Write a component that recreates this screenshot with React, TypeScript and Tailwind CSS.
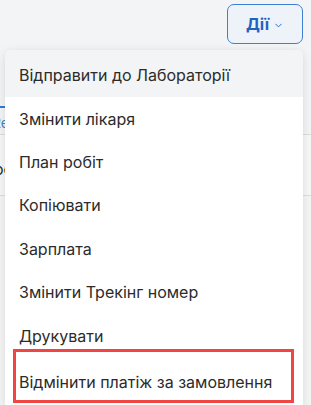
import { ChevronDown } from "lucide-react";

const items = [
  "Змінити лікаря",
  "План робіт",
  "Копіювати",
  "Зарплата",
  "Змінити Трекінг номер",
  "Друкувати",
];

export default function App() {
  return (
    <div
      className="relative h-[405px] w-[311px] overflow-hidden bg-[#f3f4f6] text-[#2b2b2b]"
      style={{ fontFamily: "Inter, 'Noto Sans', sans-serif" }}
    >
      {/* page header */}
      <div className="flex h-[48px] items-start justify-end pr-[8px] pt-[4px]">
        <button className="flex h-[40px] w-[76px] items-center justify-center gap-[4px] rounded-[7px] border-[1.5px] border-[#3d7fd4] bg-[#eef3fa] text-[16px] font-bold text-[#1f63c2]">
          Дії
          <ChevronDown className="mt-[2px] h-[11px] w-[11px]" strokeWidth={2} />
        </button>
      </div>

      {/* content behind the menu */}
      <div className="mt-[58px] border-t-[2px] border-[#2f7ad6] w-[40px]" />
      <div className="h-[26px] pl-[0px] pt-[4px] text-[14px] text-[#4a7fc0] -ml-[8px]">
        Re
      </div>
      <div className="h-[61px] border-t border-[#dcdde0] bg-[#f7f7f8] pt-[22px] text-[16px] -ml-[6px]">
        oc
      </div>
      <div className="h-[220px] border-t border-[#dcdde0] bg-[#f5f5f6]" />

      {/* dropdown menu */}
      <div className="absolute left-[5px] top-[50px] w-[298px] overflow-hidden rounded-t-[6px] bg-white shadow-[0_2px_10px_rgba(0,0,0,0.12)]">
        <div className="flex h-[47px] items-center bg-[#f3f4f6] pl-[14px] pt-[3px] text-[16px]">
          Відправити до Лабораторії
        </div>
        {items.map((t) => (
          <div key={t} className="flex h-[43.4px] items-center pl-[14px] text-[16px]">
            {t}
          </div>
        ))}
        <div className="flex h-[50px] items-center pl-[14px] text-[16px]">
          Відмінити платіж за замовлення
        </div>
      </div>

      {/* highlight frame */}
      <div className="absolute left-[13px] top-[349px] h-[54px] w-[281px] border-[3px] border-[#ef4545]" />
    </div>
  );
}
